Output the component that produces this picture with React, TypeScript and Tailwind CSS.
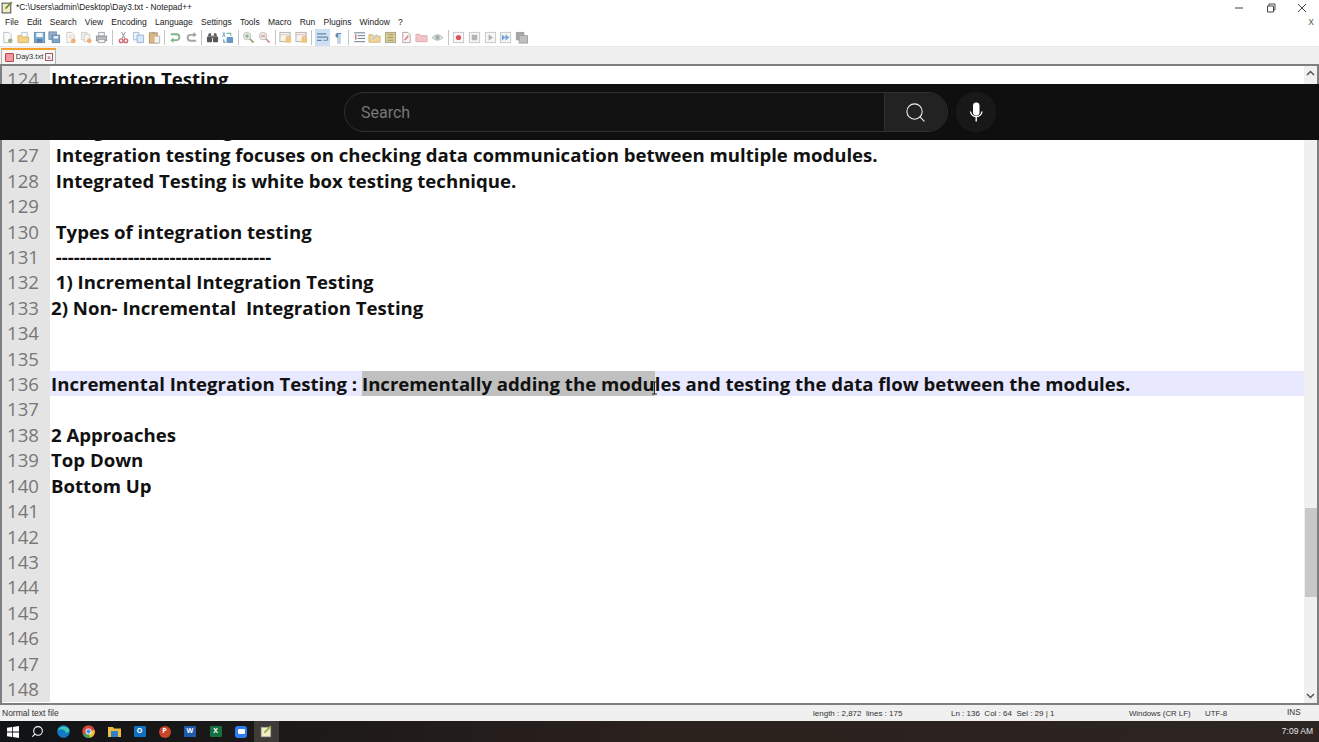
import { Search } from "lucide-react";
import type { ReactNode } from "react";

const lines: Array<[number, string, boolean?]> = [
  [124, "Integration Testing"],
  [125, ""],
  [126, " Integration Testing,"],
  [127, " Integration testing focuses on checking data communication between multiple modules."],
  [128, " Integrated Testing is white box testing technique."],
  [129, ""],
  [130, " Types of integration testing"],
  [131, " ------------------------------------"],
  [132, " 1) Incremental Integration Testing"],
  [133, "2) Non- Incremental  Integration Testing"],
  [134, ""],
  [135, ""],
  [136, "", true],
  [137, ""],
  [138, "2 Approaches"],
  [139, "Top Down"],
  [140, "Bottom Up"],
  [141, ""],
  [142, ""],
  [143, ""],
  [144, ""],
  [145, ""],
  [146, ""],
  [147, ""],
  [148, ""],
];

const menus = ["File", "Edit", "Search", "View", "Encoding", "Language", "Settings", "Tools", "Macro", "Run", "Plugins", "Window", "?"];

function Ico({ children }: { children: ReactNode }) {
  return (
    <svg width="13" height="13" viewBox="0 0 14 14" fill="none" strokeWidth="1" className="opacity-80">
      {children}
    </svg>
  );
}

const page = "M3 1.5h5.5L11 4v8.5H3z";

// notepad++ toolbar, one entry per button, split at the separators
const toolGroups: Array<Array<{ icon: ReactNode; active?: boolean }>> = [
  [
    { icon: <Ico><path d={page} fill="#fafafa" stroke="#a8adb3" /><circle cx="10" cy="10.5" r="2.5" fill="#7aa56a" /></Ico> },
    { icon: <Ico><path d="M5 1.5h6v6H5z" fill="#fbfbfb" stroke="#9fb4cc" /><path d="M1 5h4l1 1.5h6.5v6H1z" fill="#f2c766" stroke="#d19c3a" /></Ico> },
    { icon: <Ico><rect x="1.5" y="1.5" width="11" height="11" fill="#5a97cb" stroke="#3b6f9f" /><rect x="3.5" y="2" width="7" height="4.5" fill="#eef4fa" /><rect x="4" y="8.5" width="6" height="4" fill="#2f6088" /></Ico> },
    { icon: <Ico><rect x="1" y="1" width="8" height="8" fill="#7b9cc0" stroke="#51718f" /><rect x="4.5" y="4.5" width="8" height="8" fill="#5e8eb8" stroke="#3f6a8f" /><rect x="6" y="5.5" width="5" height="2.5" fill="#e8f0f6" /></Ico> },
    { icon: <Ico><path d={page} fill="#f7f3f0" stroke="#c5c0bc" /><path d="M5 5h4M5 7h4" stroke="#d8d0cc" /><circle cx="10" cy="10.5" r="2.5" fill="#ec9a52" /></Ico> },
    { icon: <Ico><path d="M1.5 1.5h6v8h-6z" fill="#f4f1ee" stroke="#c5c0bc" /><path d="M4.5 3.5h6v8h-6z" fill="#f7f3f0" stroke="#c5c0bc" /><circle cx="10" cy="10.5" r="2.5" fill="#ec9a52" /></Ico> },
    { icon: <Ico><rect x="4" y="1.5" width="6" height="4" fill="#f5f5f5" stroke="#8c8f93" /><rect x="1.5" y="5.5" width="11" height="5" fill="#a7abb0" stroke="#71757a" /><rect x="3.5" y="9" width="7" height="3.5" fill="#f2f2f2" stroke="#8c8f93" /></Ico> },
  ],
  [
    { icon: <Ico><path d="M5 1l3.5 7M9 1L5.5 8" stroke="#8f8f8f" strokeWidth="1.2" /><circle cx="4.5" cy="10.5" r="2" stroke="#c2424f" strokeWidth="1.5" /><circle cx="9.5" cy="10.5" r="2" stroke="#c2424f" strokeWidth="1.5" /></Ico> },
    { icon: <Ico><path d="M1.5 1.5h6v8h-6z" fill="#e7eff9" stroke="#8aa9d0" /><path d="M5.5 4.5h7v8h-7z" fill="#d0e0f4" stroke="#7d9fcb" /></Ico> },
    { icon: <Ico><rect x="1.5" y="2" width="8.5" height="11" fill="#d9a55c" stroke="#a97a3a" /><rect x="4" y="1" width="3.5" height="2" fill="#8f8f8f" /><path d="M6.5 5.5h6v7.5h-6z" fill="#f3f0ea" stroke="#a5a29b" /></Ico> },
  ],
  [
    { icon: <Ico><path d="M2 3.5h6a3.2 3.2 0 0 1 0 6.4H4" stroke="#5fa46f" strokeWidth="2" /><path d="M5 7l-3.5 3L5 13z" fill="#5fa46f" /></Ico> },
    { icon: <Ico><path d="M12 10.5H6a3.2 3.2 0 0 1 0-6.4h4" stroke="#8e8e8e" strokeWidth="2" /><path d="M9 1l3.5 3L9 7z" fill="#8e8e8e" /></Ico> },
  ],
  [
    { icon: <Ico><path d="M2 6l1-3.5h2.5V6zM12 6l-1-3.5H8.5V6z" fill="#3a3a3a" /><rect x="1" y="6" width="5.5" height="6" rx="1" fill="#2c2c2c" /><rect x="7.5" y="6" width="5.5" height="6" rx="1" fill="#2c2c2c" /><rect x="5.5" y="5" width="3" height="3" fill="#555" /></Ico> },
    { icon: <Ico><path d="M2 1.5l2.5 5M4 1.5L1.5 6.5" stroke="#4b87b8" /><rect x="6" y="6.5" width="7" height="6.5" rx="1" fill="#3f7fb4" /><path d="M6 2.5h4.5v2.5" stroke="#5ca2a0" strokeWidth="1.2" /><path d="M3 9v3h2" stroke="#3f7fb4" strokeWidth="1.2" /></Ico> },
  ],
  [
    { icon: <Ico><circle cx="5.5" cy="5.5" r="4" fill="#dfe6e2" stroke="#a9b3ad" /><path d="M8.5 8.5l4 4" stroke="#8e7a45" strokeWidth="1.6" /><path d="M5.5 3.5v4M3.5 5.5h4" stroke="#6f9a68" strokeWidth="1.2" /></Ico> },
    { icon: <Ico><circle cx="5.5" cy="5.5" r="4" fill="#e9e2e2" stroke="#b7adad" /><path d="M8.5 8.5l4 4" stroke="#b67474" strokeWidth="1.6" /><path d="M3.5 5.5h4" stroke="#c95c5c" strokeWidth="1.2" /></Ico> },
  ],
  [
    { icon: <Ico><rect x="1" y="1.5" width="11" height="10" fill="#f6f2ea" stroke="#a3a09a" /><path d="M1 4h11" stroke="#c3c0ba" /><rect x="7" y="7.5" width="6" height="5" fill="#ecb75a" /><path d="M8.5 7.5V6h3v1.5" stroke="#c7953f" /></Ico> },
    { icon: <Ico><rect x="1" y="1.5" width="11" height="10" fill="#f6f2ea" stroke="#a3a09a" /><path d="M1 4h11" stroke="#d7a79e" /><rect x="7" y="7.5" width="6" height="5" fill="#ecb75a" /><path d="M8.5 7.5V6h3v1.5" stroke="#c7953f" /></Ico> },
  ],
  [
    { active: true, icon: <Ico><path d="M1 3h10M1 6.5h11.5M1 10h5" stroke="#4a6f98" strokeWidth="1.3" /><path d="M12.5 6.5V10H8" stroke="#4a6f98" /></Ico> },
    { icon: <span className="font-['Liberation_Sans',sans-serif] text-[12px] leading-none text-[#5d86b5]">¶</span> },
  ],
  [
    { icon: <Ico><path d="M1 2h12M5 5h8M5 8h8M1 11.5h12" stroke="#3d4f6b" /><path d="M3 3.5v6" stroke="#b84a4a" strokeWidth="1.4" /></Ico> },
    { icon: <Ico><path d="M1 4h4l1 1.5h7v6.5H1z" fill="#f1cb7c" stroke="#c8a25a" /><path d="M5 9l5-5" stroke="#a9c4dd" strokeWidth="2" /></Ico> },
    { icon: <Ico><rect x="1.5" y="1.5" width="11" height="11" fill="#cfc27a" stroke="#8d8d68" /><path d="M4 4h6M4 7h6M4 10h6" stroke="#8a7c40" /></Ico> },
    { icon: <Ico><path d={page} fill="#fbf6f6" stroke="#9c8a8a" /><path d="M5 10l4-5" stroke="#d6545f" strokeWidth="1.6" /></Ico> },
    { icon: <Ico><path d="M1 3.5h4l1 1.5h7v6.5H1z" fill="#efb7bf" stroke="#d9949f" /></Ico> },
    { icon: <Ico><path d="M1 7q6-6 12 0q-6 6-12 0z" fill="#d5dcdc" stroke="#a1a9a9" /><circle cx="7" cy="7" r="2.3" fill="#8a9696" /></Ico> },
  ],
  [
    { icon: <Ico><rect x="1.5" y="1.5" width="11" height="11" fill="#f5f5f5" stroke="#bbb" /><circle cx="7" cy="7" r="2.8" fill="#d8262c" /></Ico> },
    { icon: <Ico><rect x="1.5" y="1.5" width="11" height="11" fill="#f5f5f5" stroke="#bbb" /><rect x="4" y="4" width="6" height="6" fill="#a3a3a3" /></Ico> },
    { icon: <Ico><rect x="1.5" y="1.5" width="11" height="11" fill="#f5f5f5" stroke="#bbb" /><path d="M5 3.5l4.5 3.5L5 10.5z" fill="#9b9b9b" /></Ico> },
    { icon: <Ico><rect x="1.5" y="1.5" width="11" height="11" fill="#f5f5f5" stroke="#bbb" /><path d="M3 3.5L7 7l-4 3.5zM7 3.5L11 7l-4 3.5z" fill="#4f8dce" /></Ico> },
    { icon: <Ico><rect x="1" y="1" width="9" height="9" fill="#8f8f8f" /><rect x="4.5" y="5" width="9" height="8" fill="#b0b0b0" stroke="#8a8a8a" /></Ico> },
  ],
];

function Tool({ icon, active }: { icon: ReactNode; active?: boolean }) {
  return (
    <div className={`flex h-[17px] w-[15.7px] items-center justify-center ${active ? "bg-[#cfe0f2]" : ""}`}>
      {icon}
    </div>
  );
}

function Slot({ w, active, children }: { w: string; active?: boolean; children: ReactNode }) {
  return <div className={`flex h-full items-center justify-center ${w} ${active ? "bg-[#3d3a38]" : ""}`}>{children}</div>;
}

export default function App() {
  return (
    <div className="flex h-[742px] w-[1319px] flex-col overflow-hidden bg-white font-['Open_Sans',sans-serif]">
      {/* title bar */}
      <div className="flex h-[15px] shrink-0 items-center pl-[1px] font-['Liberation_Sans',sans-serif] text-[8.4px] text-[#222]">
        <svg width="13" height="13" viewBox="0 0 12 12" className="mr-[2px]">
          <rect x="1" y="2" width="8" height="9" fill="#f2efc8" stroke="#555" />
          <path d="M4 7l6-6" stroke="#6a8f3a" strokeWidth="1.5" />
        </svg>
        <span>*C:\Users\admin\Desktop\Day3.txt - Notepad++</span>
        <div className="ml-auto flex items-center">
          <svg width="10" height="10" viewBox="0 0 10 10" className="mr-[22px]"><path d="M1 5h8" stroke="#444" /></svg>
          <svg width="10" height="10" viewBox="0 0 10 10" className="mr-[21px]"><path d="M1.5 3h6v6h-6zM3 3V1h6v6H7.5" fill="none" stroke="#444" /></svg>
          <svg width="10" height="10" viewBox="0 0 10 10" className="mr-[12px]"><path d="M1 1l8 8M9 1l-8 8" stroke="#444" /></svg>
        </div>
      </div>

      {/* menu bar */}
      <div className="flex h-[14px] shrink-0 items-center gap-[8.2px] px-[5px] font-['Liberation_Sans',sans-serif] text-[8.5px] text-[#222]">
        {menus.map((m) => (
          <span key={m}>{m}</span>
        ))}
        <span className="ml-auto text-[#555]">X</span>
      </div>

      {/* toolbar */}
      <div className="flex h-[17px] shrink-0 items-center">
        {toolGroups.map((group, i) => (
          <div key={i} className="flex items-center">
            {group.map((t, j) => (
              <Tool key={j} icon={t.icon} active={t.active} />
            ))}
            {i < toolGroups.length - 1 && <div className="mx-[2.2px] h-[15px] w-px bg-[#c4c4c4]" />}
          </div>
        ))}
      </div>

      {/* tab bar */}
      <div className="flex h-[18px] shrink-0 items-end border-t border-[#e8e8e8] bg-[#f0f0f0] pl-[1px]">
        <div className="flex h-[16px] w-[55px] items-center gap-[2px] border-x border-[#b5b5b5] border-t-2 border-t-[#f6a12e] bg-[#f6f6f6] pl-[3px] font-['Liberation_Sans',sans-serif] text-[7.5px] text-[#333]">
          <span className="h-[9px] w-[9px] rounded-[1px] border border-[#c2404a] bg-[#eb9aa2]" />
          <span>Day3.txt</span>
          <span className="ml-auto mr-[2px] flex h-[8px] w-[8px] items-center justify-center border border-[#a05a5f] text-[7px] leading-none text-[#a05a5f]">×</span>
        </div>
      </div>

      {/* editor */}
      <div className="relative flex min-h-0 flex-1 border-2 border-[#7f7f7f]">
        <div className="min-w-0 flex-1 overflow-hidden text-[18.6px] font-bold leading-[25.43px] text-[#111]">
          {lines.map(([n, text, current]) => (
            <div key={n} className={`flex h-[25.43px] ${current ? "bg-[#e8e8ff]" : ""}`}>
              <div className="w-[48px] shrink-0 bg-[#e4e4e4] pl-[5px] font-normal text-[#777]">{n}</div>
              <div className="pl-px whitespace-pre">
                {current ? (
                  <>
                    Incremental Integration Testing : <span className="bg-[#c0c0c0]">Incrementally adding the modu</span>les and testing the data flow between the modules.
                  </>
                ) : (
                  text
                )}
              </div>
            </div>
          ))}
        </div>

        {/* scrollbar */}
        <div className="relative flex w-[13px] shrink-0 flex-col items-center justify-between bg-[#f0f0f0] py-[4px]">
          <svg width="9" height="7" viewBox="0 0 9 7"><path d="M1 5l3.5-3.5L8 5" fill="none" stroke="#555" strokeWidth="1.5" /></svg>
          <svg width="9" height="7" viewBox="0 0 9 7"><path d="M1 2l3.5 3.5L8 2" fill="none" stroke="#555" strokeWidth="1.5" /></svg>
          <div className="absolute left-px right-0 top-[442px] h-[89px] bg-[#c8c8c8]" />
        </div>

        {/* mouse cursor */}
        <svg width="7" height="14" viewBox="0 0 7 14" className="absolute left-[649px] top-[315px]">
          <path d="M1 1h5M3.5 1v12M1 13h5" fill="none" stroke="#222" />
        </svg>

        {/* video search overlay */}
        <div className="absolute -left-[2px] -right-[2px] top-[18px] flex h-[56px] items-center bg-[#0f0f0f] pl-[344px]">
          <div className="flex h-[40px] w-[604px] items-center rounded-full border border-[#303030] bg-[#121212] pl-[16px] font-['Roboto',sans-serif] text-[16px] font-normal text-[#777]">
            <span className="flex-1 pt-px">Search</span>
            <div className="flex h-full w-[63px] items-center justify-center rounded-r-full border-l border-[#303030] bg-[#222222] pr-[2px]">
              <Search size={23} strokeWidth={1.1} color="#f1f1f1" />
            </div>
          </div>
          <div className="ml-[8px] flex h-[40px] w-[40px] items-center justify-center rounded-full bg-[#181818]">
            <svg width="24" height="24" viewBox="0 0 24 24" fill="none">
              <rect x="9" y="2.5" width="6.5" height="13" rx="3.25" fill="#fff" />
              <path d="M6.5 11.5a5.8 5.8 0 0 0 11.5 0M12.2 17v4.5" stroke="#fff" strokeWidth="1.4" />
            </svg>
          </div>
        </div>
      </div>

      {/* status bar */}
      <div className="flex h-[16px] shrink-0 items-center bg-[#f0f0f0] pl-[2px] pt-px font-['Liberation_Sans',sans-serif] text-[8.2px] text-[#333]">
        <span className="w-[811px] text-[8.5px]">Normal text file</span>
        <span className="w-[138px] text-[8px]">length : 2,872&nbsp;&nbsp;lines : 175</span>
        <span className="w-[178px] text-[8px]">Ln : 136&nbsp;&nbsp;Col : 64&nbsp;&nbsp;Sel : 29 | 1</span>
        <span className="w-[76px] text-[7.8px]">Windows (CR LF)</span>
        <span className="w-[82px] text-[7.8px]">UTF-8</span>
        <span>INS</span>
      </div>

      {/* taskbar */}
      <div className="flex h-[21px] shrink-0 items-center bg-gradient-to-r from-[#111316] via-[#2b211d] to-[#2c2522] text-white">
        <Slot w="w-[25px]">
          <svg width="12" height="12" viewBox="0 0 12 12"><path d="M0 1.7L5 1v4.6H0zM5.8.9L12 0v5.6H5.8zM0 6.4h5V11l-5-.7zM5.8 6.4H12V12l-6.2-.9z" fill="#fff" /></svg>
        </Slot>
        <Slot w="w-[25px]">
          <Search size={13} color="#fff" className="-scale-x-100" />
        </Slot>
        <Slot w="w-[26px]">
          <svg width="13" height="13" viewBox="0 0 12 12">
            <circle cx="6" cy="6" r="5.8" fill="#1478c8" />
            <path d="M.6 5.4C1.6 1.6 8-.6 11 4c.8 1.6-.2 3-2 3-1.2 0-1.8-.6-1.5-1.4C6 3.6 2.4 3 .6 5.4z" fill="#3ccbb0" />
          </svg>
        </Slot>
        <Slot w="w-[25px]">
          <svg width="13" height="13" viewBox="0 0 12 12">
            <circle cx="6" cy="6" r="5.8" fill="#d9483b" />
            <path d="M6 6L1 9a5.8 5.8 0 0 0 6.5 2.8z" fill="#3aa757" />
            <path d="M6 6l1.5 5.8A5.8 5.8 0 0 0 11.6 4.5z" fill="#f4c430" />
            <circle cx="6" cy="6" r="2.7" fill="#fff" />
            <circle cx="6" cy="6" r="2" fill="#4a8fe0" />
          </svg>
        </Slot>
        <Slot w="w-[26px]">
          <svg width="13" height="12" viewBox="0 0 13 12">
            <path d="M0 1h5l1 1.5h7V11H0z" fill="#eebb45" />
            <rect x="3" y="5" width="7" height="6" fill="#2f80c8" />
          </svg>
        </Slot>
        <Slot w="w-[25px]">
          <span className="flex h-[11px] w-[12px] items-center justify-center rounded-[1px] bg-[#1170c0] text-[7px] font-bold">O</span>
        </Slot>
        <Slot w="w-[25px]">
          <span className="flex h-[12px] w-[12px] items-center justify-center rounded-full bg-[#c8452a] text-[7px] font-bold">P</span>
        </Slot>
        <Slot w="w-[26px]">
          <span className="flex h-[11px] w-[12px] items-center justify-center rounded-[1px] bg-[#1f5aa8] text-[7px] font-bold">W</span>
        </Slot>
        <Slot w="w-[25px]">
          <span className="flex h-[11px] w-[12px] items-center justify-center rounded-[1px] bg-[#17703f] text-[7px] font-bold">X</span>
        </Slot>
        <Slot w="w-[26px]">
          <span className="flex h-[12px] w-[12px] items-center justify-center rounded-[3px] bg-[#2d7cf0]">
            <span className="h-[5px] w-[7px] rounded-[1px] bg-white" />
          </span>
        </Slot>
        <Slot w="w-[25px]" active>
          <svg width="13" height="13" viewBox="0 0 12 12">
            <rect x="1" y="2" width="9" height="9" fill="#f2efc8" stroke="#888" strokeWidth="0.6" />
            <path d="M4 7l6-6" stroke="#8fb040" strokeWidth="1.6" />
          </svg>
        </Slot>
        <span className="ml-auto pr-[6px] font-['Liberation_Sans',sans-serif] text-[8.5px] text-[#e6e6e6]">7:09 AM</span>
      </div>
    </div>
  );
}
